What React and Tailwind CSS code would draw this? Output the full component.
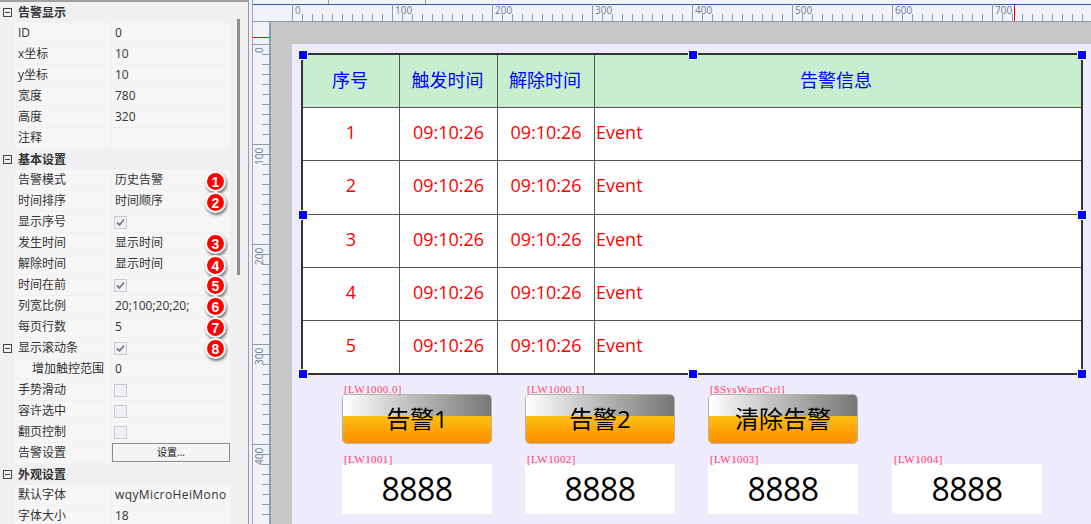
import React from 'react';

const cjk = "font-['Open_Sans','Noto_Sans_CJK_SC',sans-serif]";

// property grid data, one group per section
const groups = [
  {
    title: '告警显示',
    rows: [
      { name: 'ID', value: '0' },
      { name: 'x坐标', value: '10' },
      { name: 'y坐标', value: '10' },
      { name: '宽度', value: '780' },
      { name: '高度', value: '320' },
      { name: '注释', value: '' },
    ],
  },
  {
    title: '基本设置',
    rows: [
      { name: '告警模式', value: '历史告警', badge: 1 },
      { name: '时间排序', value: '时间顺序', badge: 2 },
      { name: '显示序号', check: true },
      { name: '发生时间', value: '显示时间', badge: 3 },
      { name: '解除时间', value: '显示时间', badge: 4 },
      { name: '时间在前', check: true, badge: 5 },
      { name: '列宽比例', value: '20;100;20;20;', badge: 6 },
      { name: '每页行数', value: '5', badge: 7 },
      { name: '显示滚动条', check: true, badge: 8, collapsible: true },
      { name: '增加触控范围', value: '0', indent: true },
      { name: '手势滑动', check: false },
      { name: '容许选中', check: false },
      { name: '翻页控制', check: false },
      { name: '告警设置', button: '设置...' },
    ],
  },
  {
    title: '外观设置',
    rows: [
      { name: '默认字体', value: 'wqyMicroHeiMono', wide: true },
      { name: '字体大小', value: '18' },
    ],
  },
];

const MinusBox = () => (
  <span className="absolute left-[3px] top-[6px] w-[9px] h-[9px] border border-[#444] flex items-center justify-center">
    <span className="w-[5px] h-px bg-[#444]" />
  </span>
);

const Badge = ({ n }) => (
  <span className={`absolute left-[93px] z-10 w-[21px] h-[21px] rounded-full bg-[#ff0000] border-2 border-white shadow-[1px_2px_3px_rgba(0,0,0,0.55)] flex items-center justify-center text-white text-[14px] leading-none font-bold font-['Liberation_Sans',sans-serif] ${n < 3 || n === 4 ? 'top-[1px]' : 'top-0'}`}>
    {n}
  </span>
);

const PropRow = ({ row }) => (
  <div className="relative flex h-[21px] pl-[15px] pb-px">
    {row.collapsible && <MinusBox />}
    <div className={`w-[96px] mr-px bg-[#f6f6f6] flex items-center text-[#333] whitespace-nowrap ${row.indent ? 'pl-[17px]' : 'pl-[3px]'}`}>
      {row.name}
    </div>
    <div className={`relative w-[118px] bg-[#f6f6f6] flex items-center pl-[3px] text-[#333] whitespace-nowrap ${row.wide ? 'tracking-[0.4px]' : ''}`}>
      {row.value}
      {row.check !== undefined && (
        <span className="w-[13px] h-[13px] ml-[-1px] border border-[#c9c9d6] bg-[#f1f1f5] flex items-center justify-center">
          {row.check && (
            <svg width="9" height="9" viewBox="0 0 9 9">
              <path d="M1 4.5 L3.5 7 L8 1.5" fill="none" stroke="#7d7d7d" strokeWidth="1.8" />
            </svg>
          )}
        </span>
      )}
      {row.button && (
        <span className="absolute left-0 top-0 w-[118px] h-[19px] border border-[#8a8a8a] bg-[#f4f4f4] flex items-center justify-center text-[10px] text-[#111]">
          {row.button}
        </span>
      )}
      {row.badge && <Badge n={row.badge} />}
    </div>
  </div>
);

const PropertyPanel = () => (
  <div className={`relative w-[249px] shrink-0 bg-[#f0f0f2] border-t-2 border-t-[#a0a0a0] border-r border-r-[#9a9a9a] text-[12px] overflow-hidden ${cjk}`}>
    {groups.map(group => (
      <div key={group.title}>
        <div className="relative h-[21px] pl-[18px] flex items-center font-bold text-[#333] w-[230px]">
          <MinusBox />
          {group.title}
        </div>
        {group.rows.map(row => <PropRow key={row.name} row={row} />)}
      </div>
    ))}
    {/* scrollbar thumb */}
    <div className="absolute left-[237px] top-[17px] w-[3px] h-[256px] bg-[#8e8e8e]" />
  </div>
);

const TopRuler = () => {
  const ticks = [];
  for (let x = 0; x < 800; x += 10) {
    const major = x % 100 === 0;
    ticks.push(<line key={x} x1={x + 39.5} x2={x + 39.5} y1={major ? 0 : 10} y2="17" stroke="#8b9bb4" />);
    if (major) {
      ticks.push(<text key={`t${x}`} x={x + 42} y="10" fontSize="10" fill="#6b7a90" fontFamily="Open Sans, sans-serif">{x}</text>);
    }
  }
  return (
    <svg className="block absolute left-0 top-0" width="838" height="22">
      <rect x="0" y="0" width="838" height="1" fill="#2d5ca6" />
      <rect x="0" y="17" width="838" height="1" fill="#8b9bb4" />
      {ticks}
      <line x1="761.5" x2="761.5" y1="1" y2="17" stroke="#ff0000" />
    </svg>
  );
};

const LeftRuler = () => {
  const ticks = [];
  for (let y = 0; y < 480; y += 10) {
    const major = y % 100 === 0;
    ticks.push(<line key={y} y1={y + 23.5} y2={y + 23.5} x1={major ? 0 : 9} x2="16" stroke="#8b9bb4" />);
    if (major) {
      ticks.push(
        <text key={`t${y}`} transform={`translate(10 ${y + 25}) rotate(-90) translate(-${String(y).length * 6 + 1} 0)`} fontSize="10" fill="#6b7a90" fontFamily="Open Sans, sans-serif">{y}</text>
      );
    }
  }
  return (
    <svg className="block absolute left-0 top-[21px]" width="17" height="503">
      <rect x="16" y="0" width="1" height="503" fill="#8b9bb4" />
      <rect x="0" y="16" width="16" height="1" fill="#ff0000" />
      {ticks}
    </svg>
  );
};

const Handle = ({ className }) => (
  <span className={`absolute w-[8px] h-[8px] bg-[#0000ff] border border-white box-content ${className}`} />
);

const headCell = 'flex items-center justify-center border-r border-[#555] pr-[2px] pb-[2px]';
const bodyCell = 'flex items-center justify-center border-r border-[#555] pb-[4px]';
const rowHeights = ['h-[53px]', 'h-[54px]', 'h-[53px]', 'h-[53px]', 'h-[52px]'];

const AlarmTable = () => (
  <div className={`relative w-[782px] border-2 border-[#333] bg-white text-[18px] ${cjk}`}>
    <div className="flex h-[53px] bg-[#c6eecf] text-[#0000ff] border-b border-[#555]">
      <div className={`${headCell} w-[97px]`}>序号</div>
      <div className={`${headCell} w-[98px]`}>触发时间</div>
      <div className={`${headCell} w-[97px]`}>解除时间</div>
      <div className="flex-1 flex items-center justify-center pr-[4px] pb-[2px]">告警信息</div>
    </div>
    {rowHeights.map((height, i) => (
      <div key={i} className={`flex text-[#ff0000] ${height} ${i < 4 ? 'border-b border-[#555]' : ''}`}>
        <div className={`${bodyCell} w-[97px]`}>{i + 1}</div>
        <div className={`${bodyCell} w-[98px]`}>09:10:26</div>
        <div className={`${bodyCell} w-[97px]`}>09:10:26</div>
        <div className="flex-1 flex items-center pl-[1px] pb-[4px]">Event</div>
      </div>
    ))}
    <Handle className="left-[-5px] top-[-5px]" />
    <Handle className="left-[385px] top-[-5px]" />
    <Handle className="right-[-6px] top-[-5px]" />
    <Handle className="left-[-5px] top-[155px]" />
    <Handle className="right-[-6px] top-[155px]" />
    <Handle className="left-[-5px] bottom-[-6px]" />
    <Handle className="left-[385px] bottom-[-6px]" />
    <Handle className="right-[-6px] bottom-[-6px]" />
  </div>
);

const Tag = ({ children }) => (
  <div className="h-[10px] pl-[2px] text-[11px] leading-[10px] tracking-[0.4px] text-[#ff4565] whitespace-nowrap font-['Liberation_Serif',serif]">
    {children}
  </div>
);

const AlarmButton = ({ tag, label }) => (
  <div className="w-[150px]">
    <Tag>{tag}</Tag>
    <div className={`h-[50px] rounded-[5px] border border-[#b4b4a8] overflow-hidden relative text-[24px] text-black ${cjk}`}>
      <div className="h-[21px] bg-gradient-to-r from-white to-[#777777]" />
      <div className="h-[27px] bg-gradient-to-b from-[#fcc010] to-[#ff8c00]" />
      <div className="absolute inset-0 flex items-center justify-center">{label}</div>
    </div>
  </div>
);

const NumBox = ({ tag }) => (
  <div className="w-[150px]">
    <Tag>{tag}</Tag>
    <div className={`h-[50px] bg-white flex items-center justify-center text-[32px] tracking-[-0.5px] text-black ${cjk}`}>8888</div>
  </div>
);

export default function App() {
  return (
    <div className="flex w-[1091px] h-[524px] overflow-hidden bg-white">
      <PropertyPanel />
      <div className="w-[3px] shrink-0 bg-[#eef0f6]" />
      <div className="relative flex-1 bg-[#f2f3f9] overflow-hidden border-l border-l-[#9aa4b6]">
        {/* strip of the window behind the ruler */}
        <div className="absolute left-[75px] top-0 w-px h-[4px] bg-[#9a9a9a]" />
        <div className="absolute left-[172px] top-0 w-px h-[4px] bg-[#9a9a9a]" />
        <div className="absolute left-0 top-[4px]"><TopRuler /></div>
        <LeftRuler />
        <div className="ml-[17px] mt-[21px] h-[503px] bg-[#c8c8c8] pl-[21px] pt-[22px] border-l border-t border-[#8b9bb4]">
          <div className="h-full bg-[#eeebfd] pl-[9px] pt-[9px] pb-0">
            <AlarmTable />
            <div className="flex gap-[33px] ml-[41px] mt-[9px]">
              <AlarmButton tag="[LW1000.0]" label="告警1" />
              <AlarmButton tag="[LW1000.1]" label="告警2" />
              <AlarmButton tag="[$SysWarnCtrl]" label="清除告警" />
            </div>
            <div className="flex gap-[33px] ml-[41px] mt-[10px]">
              <NumBox tag="[LW1001]" />
              <NumBox tag="[LW1002]" />
              <NumBox tag="[LW1003]" />
              <div className="ml-[1px]"><NumBox tag="[LW1004]" /></div>
            </div>
          </div>
        </div>
      </div>
    </div>
  );
}
